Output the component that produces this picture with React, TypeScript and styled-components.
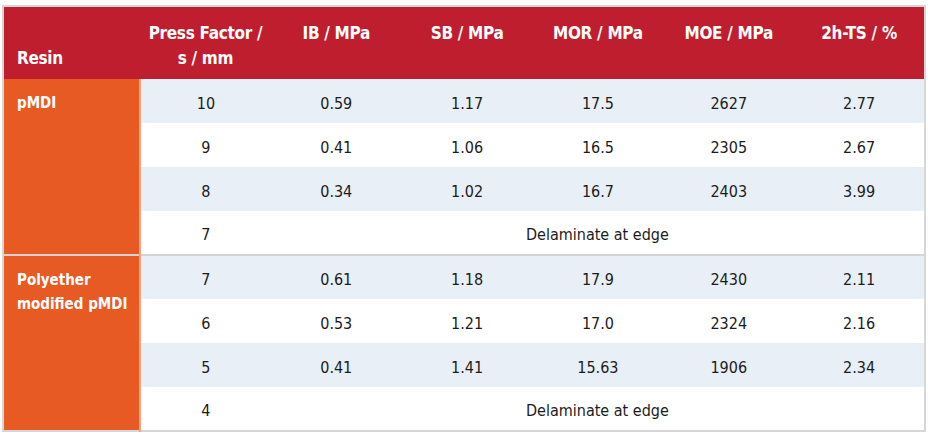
import React from 'react';
import styled, { createGlobalStyle } from 'styled-components';

const GlobalStyle = createGlobalStyle`
  html, body {
    margin: 0;
    padding: 0;
    background: #ffffff;
  }
  body {
    font-family: "DejaVu Sans Condensed", "Liberation Sans", sans-serif;
  }
`;

const Page = styled.div`
  width: 928px;
  height: 439px;
  padding: 5px 0 0 2px;
  box-sizing: border-box;
`;

const Table = styled.table`
  width: 924px;
  border-collapse: collapse;
  table-layout: fixed;
  border: 2px solid #d6d6d6;
`;

const HeadRow = styled.tr`
  background: #be1e2d;
  height: 73px;
`;

const HeadCell = styled.th<{ $left?: boolean }>`
  height: 73px;
  box-sizing: border-box;
  color: #ffffff;
  font-size: 17px;
  font-weight: 700;
  line-height: 25px;
  white-space: nowrap;
  padding: ${p => (p.$left ? '39px 0 0 13px' : '14px 0 0')};
  text-align: ${p => (p.$left ? 'left' : 'center')};
  vertical-align: top;
  letter-spacing: -0.3px;
`;

const Row = styled.tr<{ $shade: boolean; $groupEnd?: boolean }>`
  height: 44px;
  background: ${p => (p.$shade ? '#e8eff6' : '#ffffff')};
  border-bottom: ${p => (p.$groupEnd ? '2px solid #d4d4d4' : 'none')};
`;

const ResinCell = styled.td`
  background: #e85a24;
  color: #ffffff;
  font-size: 15px;
  font-weight: 700;
  line-height: 24px;
  white-space: nowrap;
  vertical-align: top;
  padding: 12px 0 0 13px;
  border-right: 2px solid #f3a27f;
`;

const Cell = styled.td`
  height: 44px;
  box-sizing: border-box;
  color: #1c1c1c;
  font-size: 16px;
  text-align: center;
  vertical-align: middle;
  padding: 4px 0 0;
`;

type Group = {
  resin: React.ReactNode;
  rows: { pf: string; values?: string[] }[];
};

const groups: Group[] = [
  {
    resin: 'pMDI',
    rows: [
      { pf: '10', values: ['0.59', '1.17', '17.5', '2627', '2.77'] },
      { pf: '9', values: ['0.41', '1.06', '16.5', '2305', '2.67'] },
      { pf: '8', values: ['0.34', '1.02', '16.7', '2403', '3.99'] },
      { pf: '7' },
    ],
  },
  {
    resin: (
      <>
        Polyether
        <br />
        modified pMDI
      </>
    ),
    rows: [
      { pf: '7', values: ['0.61', '1.18', '17.9', '2430', '2.11'] },
      { pf: '6', values: ['0.53', '1.21', '17.0', '2324', '2.16'] },
      { pf: '5', values: ['0.41', '1.41', '15.63', '1906', '2.34'] },
      { pf: '4' },
    ],
  },
];

const App: React.FC = () => {
  return (
    <Page>
      <GlobalStyle />
      <Table>
        <colgroup>
          <col style={{ width: 137 }} />
          <col />
          <col />
          <col />
          <col />
          <col />
          <col />
        </colgroup>
        <thead>
          <HeadRow>
            <HeadCell $left>Resin</HeadCell>
            <HeadCell>
              Press Factor /
              <br />s / mm
            </HeadCell>
            <HeadCell>IB / MPa</HeadCell>
            <HeadCell>SB / MPa</HeadCell>
            <HeadCell>MOR / MPa</HeadCell>
            <HeadCell>MOE / MPa</HeadCell>
            <HeadCell>2h-TS / %</HeadCell>
          </HeadRow>
        </thead>
        <tbody>
          {groups.map((g, gi) =>
            g.rows.map((r, ri) => (
              <Row
                key={`${gi}-${ri}`}
                $shade={ri % 2 === 0}
                $groupEnd={gi === 0 && ri === g.rows.length - 1}
              >
                {ri === 0 && <ResinCell rowSpan={g.rows.length}>{g.resin}</ResinCell>}
                <Cell>{r.pf}</Cell>
                {r.values ? (
                  r.values.map((v, vi) => <Cell key={vi}>{v}</Cell>)
                ) : (
                  <Cell colSpan={5}>Delaminate at edge</Cell>
                )}
              </Row>
            ))
          )}
        </tbody>
      </Table>
    </Page>
  );
};

export default App;
